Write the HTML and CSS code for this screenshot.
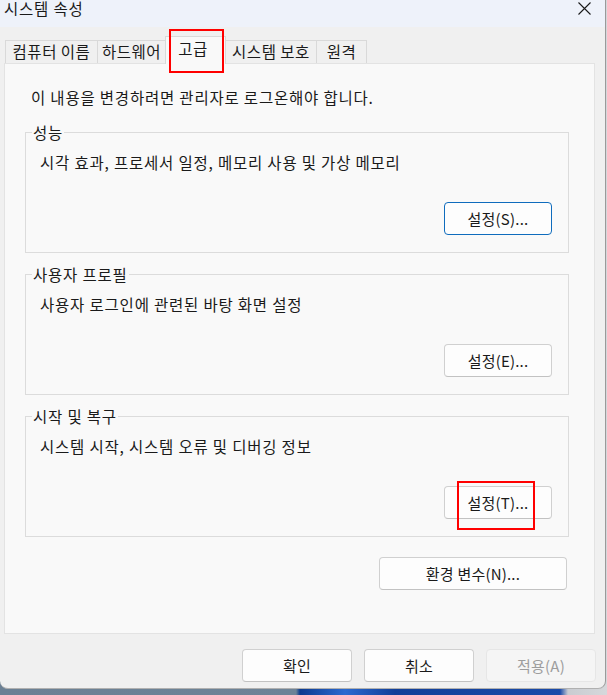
FILE: index.html
```html
<!DOCTYPE html>
<html>
    <head>
        <meta http-equiv="Content-Type" content="text/html; charset=utf8"/>
        <title>시스템 속성</title>
        <link rel="stylesheet" href="styles.css">
    </head>
    <body>
        <div class="window">
            <div class="title_bar">
                <span class="title_text">시스템 속성</span>
                <svg class="close_icon" width="13" height="13" viewBox="0 0 13 13">
                    <path d="M0.5 0.5 L12.5 12.5 M12.5 0.5 L0.5 12.5" stroke="#1a1a1a" stroke-width="1.1" fill="none"/>
                </svg>
            </div>
            <div class="client">
                <div class="tab_row">
                    <div class="tab tab_computer">컴퓨터 이름</div>
                    <div class="tab tab_hardware">하드웨어</div>
                    <div class="tab tab_advanced selected">고급</div>
                    <div class="tab tab_protect">시스템 보호</div>
                    <div class="tab tab_remote">원격</div>
                </div>
                <div class="panel">
                    <p class="note">이 내용을 변경하려면 관리자로 로그온해야 합니다.</p>

                    <fieldset class="group">
                        <legend>성능</legend>
                        <p class="group_text">시각 효과, 프로세서 일정, 메모리 사용 및 가상 메모리</p>
                        <div class="group_actions">
                            <button class="btn default_btn">설정(S)...</button>
                        </div>
                    </fieldset>

                    <fieldset class="group">
                        <legend>사용자 프로필</legend>
                        <p class="group_text">사용자 로그인에 관련된 바탕 화면 설정</p>
                        <div class="group_actions">
                            <button class="btn">설정(E)...</button>
                        </div>
                    </fieldset>

                    <fieldset class="group">
                        <legend>시작 및 복구</legend>
                        <p class="group_text">시스템 시작, 시스템 오류 및 디버깅 정보</p>
                        <div class="group_actions">
                            <button class="btn">설정(T)...</button>
                        </div>
                    </fieldset>

                    <div class="env_row">
                        <button class="btn env_btn">환경 변수(N)...</button>
                    </div>
                </div>
                <div class="footer">
                    <button class="btn footer_btn">확인</button>
                    <button class="btn footer_btn">취소</button>
                    <button class="btn footer_btn" disabled>적용(A)</button>
                </div>
            </div>

            <!-- red highlight boxes drawn over the dialog -->
            <div class="mark mark_tab"></div>
            <div class="mark mark_startup"></div>
        </div>
    </body>
</html>
```

FILE: styles.css
```css
html, body {
    margin: 0; padding: 0;
}
body {
    width: 607px; height: 695px; overflow: hidden;
    font-family: "Noto Sans CJK KR", "Noto Sans", sans-serif; font-size: 15.5px; letter-spacing: 0.8px; color: #1a1a1a;
    background: linear-gradient(90deg, #6b8094 0, #6d8397 296px, #0c3a8f 300px, #2b6ad0 345px, #113f98 395px, #1a4ba9 560px, #c9ccd1 568px, #d6d8db 607px);
}

.window {
    position: relative;
    width: 606px; height: 689px; box-sizing: border-box;
    background: #f0f0f0;
    border-right: 1px solid #9a9a9a; border-bottom: 1px solid #b0b0b0;
    border-radius: 0 0 8px 8px;
    overflow: hidden;
}

.title_bar {
    display: flex; justify-content: space-between; align-items: flex-start;
    height: 27px; padding: 0 14px 0 4px;
    background: #eef2fa;
}
.title_text {
    line-height: 20px; margin-top: -2px;
}
.close_icon {
    margin-top: 2px;
}

.client {
    padding-top: 9px;
}

.tab_row {
    display: flex; align-items: flex-end;
    margin-left: 5px; position: relative; z-index: 1;
}
.tab {
    box-sizing: border-box; height: 23px;
    border: 1px solid #d9d9d9; border-bottom: none; border-right: none;
    background: #f0f0f0;
    text-align: center; line-height: 20px; letter-spacing: 0.5px;
}
.tab_computer { width: 92px; }
.tab_hardware { width: 68px; }
.tab_advanced { width: 61px; }
.tab_protect { width: 90px; }
.tab_remote { width: 51px; border-right: 1px solid #d9d9d9; }
.tab.selected {
    height: 28px; margin-bottom: -1px; padding-top: 1px; padding-right: 5px;
    background: #f9f9f9;
    border-right: 1px solid #d9d9d9;
}
.tab.selected + .tab {
    border-left: none;
}

.panel {
    box-sizing: border-box; width: 591px; height: 571px; margin-left: 4px;
    padding: 23px 25px 0 20px;
    background: #f9f9f9; border: 1px solid #e3e3e3;
}
.note {
    margin: 0 0 15px 6px; line-height: 20px;
}

.group {
    margin: 0 0 11px 0; padding: 0 16px 17px 6px;
    border: 1px solid #dcdcdc;
}
.group legend {
    padding: 0 1px; line-height: 20px;
}
.group_text {
    margin: 10px 0 0 0; padding-left: 8px; line-height: 20px;
}
.group_actions {
    display: flex; justify-content: flex-end;
    margin-top: 30px;
}

.btn {
    box-sizing: border-box; width: 108px; height: 33px; padding: 0;
    font-family: "Noto Sans CJK KR", "Noto Sans", sans-serif; font-size: 15px; letter-spacing: 0.2px; color: #1a1a1a;
    background: #fdfdfd; border: 1px solid #d0d0d0; border-bottom-color: #c2c2c2; border-radius: 4px;
}
.default_btn {
    border: 1px solid #0f6cbd;
}
.btn:disabled {
    color: #9d9d9d; background: #f5f5f5; border-color: #e6e6e6;
}

.env_row {
    display: flex; justify-content: flex-end;
    margin-top: 20px; margin-right: 2px;
}
.env_btn { width: 188px; }

.footer {
    display: flex; justify-content: flex-end; gap: 12px;
    margin-top: 15px; padding-right: 9px;
}
.footer_btn { width: 110px; }

.mark {
    position: absolute; z-index: 2; box-sizing: border-box;
    border: 2px solid #ff0000;
}
.mark_tab { left: 169px; top: 29px; width: 55px; height: 44px; }
.mark_startup { left: 457px; top: 481px; width: 78px; height: 49px; }
```
